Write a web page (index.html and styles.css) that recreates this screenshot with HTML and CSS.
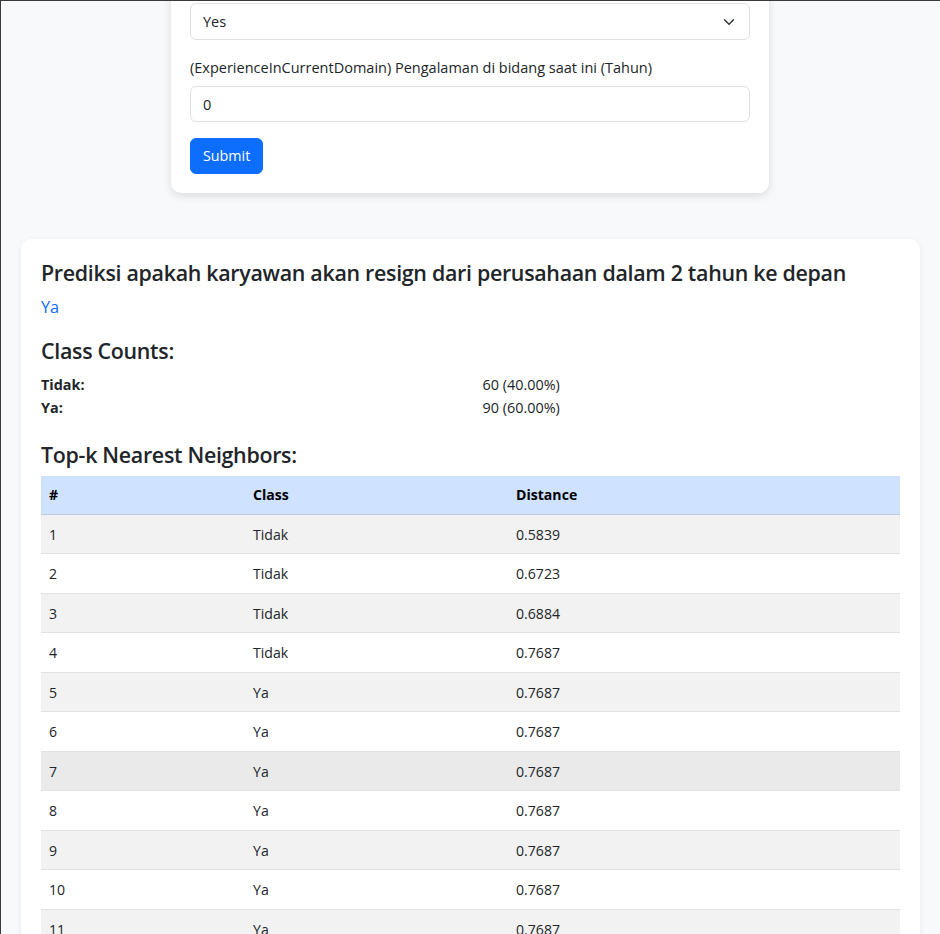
FILE: index.html
```
<!DOCTYPE html>
<html lang="id">
<head>
<meta charset="utf-8">
<title>Prediksi Resign Karyawan</title>
<link rel="stylesheet" href="styles.css">
</head>
<body>
<div class="page">
  <form class="form-card">
    <select class="form-select">
      <option>Yes</option>
      <option>No</option>
    </select>
    <label class="form-label" for="exp">(ExperienceInCurrentDomain) Pengalaman di bidang saat ini (Tahun)</label>
    <input class="form-control" id="exp" type="text" value="0">
    <button type="button" class="btn-primary">Submit</button>
  </form>

  <section class="result-card">
    <h4 class="heading">Prediksi apakah karyawan akan resign dari perusahaan dalam 2 tahun ke depan</h4>
    <p class="prediction">Ya</p>

    <h4 class="heading heading-counts">Class Counts:</h4>
    <div class="counts">
      <div class="count-label">Tidak:</div><div class="count-value">60 (40.00%)</div>
      <div class="count-label">Ya:</div><div class="count-value">90 (60.00%)</div>
    </div>

    <h4 class="heading heading-neighbors">Top-k Nearest Neighbors:</h4>
    <table class="nn-table">
      <colgroup><col class="c1"><col class="c2"><col class="c3"></colgroup>
      <thead><tr><th>#</th><th>Class</th><th>Distance</th></tr></thead>
      <tbody>
        <tr><td>1</td><td>Tidak</td><td>0.5839</td></tr>
        <tr><td>2</td><td>Tidak</td><td>0.6723</td></tr>
        <tr><td>3</td><td>Tidak</td><td>0.6884</td></tr>
        <tr><td>4</td><td>Tidak</td><td>0.7687</td></tr>
        <tr><td>5</td><td>Ya</td><td>0.7687</td></tr>
        <tr><td>6</td><td>Ya</td><td>0.7687</td></tr>
        <tr class="hover"><td>7</td><td>Ya</td><td>0.7687</td></tr>
        <tr><td>8</td><td>Ya</td><td>0.7687</td></tr>
        <tr><td>9</td><td>Ya</td><td>0.7687</td></tr>
        <tr><td>10</td><td>Ya</td><td>0.7687</td></tr>
        <tr><td>11</td><td>Ya</td><td>0.7687</td></tr>
        <tr><td>12</td><td>Ya</td><td>0.7687</td></tr>
      </tbody>
    </table>
  </section>
</div>
</body>
</html>
```
FILE: styles.css
```
html {
  border-top: 1px solid #3a3a3a;
  border-left: 1px solid #3a3a3a;
  background: #f8f9fa;
}
body {
  margin: 0;
  font-family: "Open Sans", "Noto Sans", sans-serif;
  font-size: 14.5px;
  line-height: 24px;
  color: #212529;
  background: #f8f9fa;
}
.page {
  display: flex;
  flex-direction: column;
  align-items: center;
  padding-bottom: 40px;
}
.form-card {
  box-sizing: border-box;
  width: 598px;
  margin-top: -17px;
  margin-right: 1px;
  padding: 19px;
  background: #fff;
  border-radius: 10px;
  box-shadow: 0 3px 8px rgba(0, 0, 0, 0.12);
  display: flex;
  flex-direction: column;
  align-items: flex-start;
}
.form-select,
.form-control {
  box-sizing: border-box;
  width: 100%;
  height: 37px;
  border: 1px solid #dee2e6;
  border-radius: 6px;
  background-color: #fff;
  font: inherit;
  color: #212529;
  padding: 0 12px;
  margin: 0;
  -webkit-appearance: none;
  appearance: none;
  outline: none;
}
.form-select {
  background-image: url("data:image/svg+xml,%3csvg xmlns='http://www.w3.org/2000/svg' viewBox='0 0 16 16'%3e%3cpath fill='none' stroke='%23343a40' stroke-linecap='round' stroke-linejoin='round' stroke-width='2' d='m2 5 6 6 6-6'/%3e%3c/svg%3e");
  background-repeat: no-repeat;
  background-position: right 14px center;
  background-size: 12px 12px;
  margin-bottom: 16px;
}
.form-label {
  display: block;
  margin-bottom: 6px;
}
.form-control {
  height: 36px;
  margin-bottom: 16px;
}
.btn-primary {
  height: 36px;
  padding: 0 12px;
  border: 1px solid #0d6efd;
  border-radius: 6px;
  background: #0d6efd;
  color: #fff;
  font: inherit;
  font-size: 14.3px;
}
.result-card {
  box-sizing: border-box;
  align-self: stretch;
  margin: 46px 20px 0 20px;
  padding: 20px;
  background: #fff;
  border-radius: 10px;
  box-shadow: 0 2px 6px rgba(0, 0, 0, 0.07);
}
.heading {
  margin: 0 0 8px 0;
  font-size: 21.4px;
  line-height: 28px;
  font-weight: 600;
  letter-spacing: -0.3px;
  color: #212529;
}
.prediction {
  margin: 0 0 18px 0;
  font-size: 16.3px;
  color: #0d6efd;
}
.counts {
  display: grid;
  grid-template-columns: 1fr 1fr;
  column-gap: 24px;
  font-size: 14.4px;
  line-height: 23px;
}
.count-label {
  font-weight: 700;
}
.heading-neighbors {
  margin-top: 22px;
  margin-bottom: 7px;
}
.nn-table {
  width: 100%;
  border-collapse: collapse;
  font-size: 14.1px;
  line-height: 22.5px;
}
.c1 { width: 204px; }
.c2 { width: 263px; }
.nn-table th,
.nn-table td {
  text-align: left;
  padding: 9px 8px 7px 8px;
  border-bottom: 1px solid #dee2e6;
}
.nn-table th {
  padding-top: 8px;
  padding-bottom: 7px;
  background: #cfe2ff;
  color: #000;
  font-weight: 700;
  border-bottom-color: #b9cbe8;
}
.nn-table tbody tr:nth-child(odd) td {
  background: #f2f2f2;
}
.nn-table tbody tr.hover td {
  background: #eaeaea;
}
```
